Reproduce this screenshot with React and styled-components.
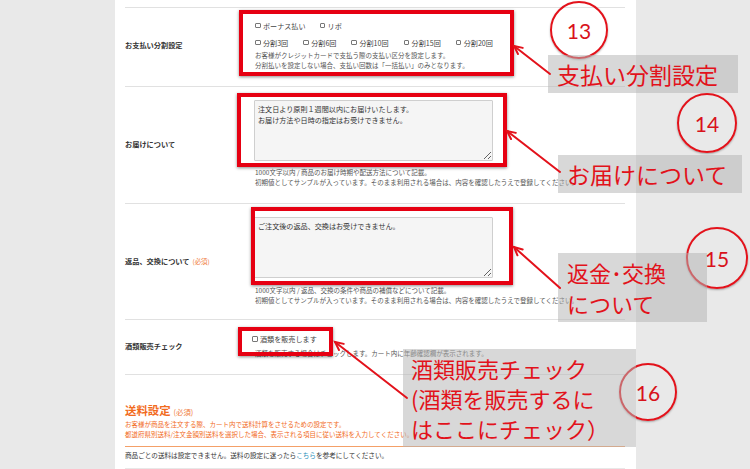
import React from 'react';
import styled, { createGlobalStyle } from 'styled-components';

const GlobalStyle = createGlobalStyle`
  html, body {
    margin: 0;
    padding: 0;
  }
  body {
    background: #e9e9e9;
    font-family: "Noto Sans CJK JP", "Noto Sans", sans-serif;
    color: #333;
  }
`;

const Screen = styled.div`
  position: relative;
  width: 750px;
  height: 469px;
  overflow: hidden;
  background: #e9e9e9;
`;

const Panel = styled.main`
  box-sizing: border-box;
  margin-left: 115px;
  width: 521px;
  height: 100%;
  padding: 7px 11px 0 10px;
  background: #fff;
`;

const Row = styled.section`
  display: grid;
  grid-template-columns: 130px 1fr;
  align-items: center;
  border-top: 1px solid #e1e1e1;
  padding: ${(p) => p.$pad};
`;

const Label = styled.div`
  font-size: 7.2px;
  font-weight: 700;
  color: #333;
  line-height: 10px;
`;

const Required = styled.span`
  margin-left: 3px;
  font-size: ${(p) => p.$fs || 6.4}px;
  font-weight: 400;
  color: #f07a3a;
`;

const Field = styled.div`
  display: flex;
  flex-direction: column;
`;

const CheckLine = styled.div`
  display: flex;
  align-items: center;
  gap: ${(p) => p.$gap || 15}px;
  height: ${(p) => p.$h || 11}px;
  margin-bottom: ${(p) => p.$mb || 0}px;
  margin-left: ${(p) => p.$ml || 0}px;
`;

const Check = styled.label`
  display: flex;
  align-items: center;
  gap: 2.5px;
  font-size: 7.1px;
  color: #444;
  white-space: nowrap;
`;

const Box = styled.span`
  box-sizing: border-box;
  width: 5.5px;
  height: 5.5px;
  border: 0.8px solid #777;
  border-radius: 1px;
  background: #fff;
`;

const Help = styled.div`
  margin-top: ${(p) => p.$mt || 0}px;
  font-size: 6.5px;
  line-height: 10px;
  color: #555;
  white-space: nowrap;
`;

const TextArea = styled.textarea`
  box-sizing: border-box;
  display: block;
  width: 239px;
  height: 61px;
  margin: 0 0 0 -1px;
  padding: 3px 3px;
  border: 1px solid #cfcfcf;
  border-radius: 1px;
  background: #f5f5f5;
  font-family: "Noto Sans CJK JP", sans-serif;
  font-size: 7.1px;
  line-height: 11px;
  color: #333;
  resize: vertical;
  outline: none;
`;

const Shipping = styled.section`
  border-top: 1px solid #e1e1e1;
  padding-top: 28px;
`;

const ShippingHead = styled.div`
  padding-bottom: 7px;
  border-bottom: 1px solid #f4a068;
  color: #f26b1d;
`;

const Title = styled.h2`
  margin: 0;
  font-size: 11.4px;
  line-height: 14px;
  font-weight: 700;
`;

const Orange = styled.div`
  font-size: 6.5px;
  line-height: 10px;
  white-space: nowrap;
`;

const Plain = styled.div`
  margin-top: 3px;
  font-size: 6.6px;
  line-height: 10px;
  color: #333;
  white-space: nowrap;
`;

const Link = styled.span`
  color: #2a8fb8;
`;

const Bar = styled.div`
  margin-top: 8px;
  height: 10px;
  background: #e8e8e8;
`;

/* annotation layer */

const Frame = styled.div`
  position: absolute;
  box-sizing: border-box;
  left: ${(p) => p.$x}px;
  top: ${(p) => p.$y}px;
  width: ${(p) => p.$w}px;
  height: ${(p) => p.$h}px;
  border: 4px solid #e60012;
  box-shadow: 0 1px 3px rgba(0, 0, 0, 0.45);
`;

const Badge = styled.div`
  position: absolute;
  box-sizing: border-box;
  left: ${(p) => p.$x - p.$r}px;
  top: ${(p) => p.$y - p.$r}px;
  width: ${(p) => p.$r * 2}px;
  height: ${(p) => p.$r * 2}px;
  display: flex;
  align-items: center;
  justify-content: center;
  border: 2.5px solid #e3121b;
  border-radius: 50%;
  box-shadow: 0 1px 2px rgba(0, 0, 0, 0.3);
  color: #d8121b;
  font-family: Lato, "Open Sans", sans-serif;
  font-size: 21px;
`;

const Caption = styled.div`
  position: absolute;
  box-sizing: border-box;
  left: ${(p) => p.$x}px;
  top: ${(p) => p.$y}px;
  width: ${(p) => p.$w}px;
  height: ${(p) => p.$h}px;
  padding-left: ${(p) => p.$pl || 9}px;
  display: flex;
  flex-direction: column;
  justify-content: center;
  background: rgba(180, 180, 180, 0.52);
  color: #e2121b;
  font-family: "Noto Sans CJK JP", sans-serif;
  font-size: ${(p) => p.$fs || 22}px;
  line-height: ${(p) => p.$lh || 30}px;
  white-space: nowrap;
`;

const Arrows = styled.svg`
  position: absolute;
  left: 0;
  top: 0;
  pointer-events: none;
`;

const payments = ['分割3回', '分割6回', '分割10回', '分割15回', '分割20回'];

const arrows = [
  [550, 74, 514, 46],
  [560, 172, 507, 131],
  [560, 288, 514, 247],
  [407, 398, 335, 342],
];

const Arrow = ({ x1, y1, x2, y2 }) => {
  const a = Math.atan2(y1 - y2, x1 - x2);
  const len = 9;
  const spread = 0.45;
  const p1 = [x2 + len * Math.cos(a + spread), y2 + len * Math.sin(a + spread)];
  const p2 = [x2 + len * Math.cos(a - spread), y2 + len * Math.sin(a - spread)];
  return (
    <g stroke="#e3121b" strokeWidth="2" fill="none" strokeLinecap="round">
      <line x1={x1} y1={y1} x2={x2} y2={y2} />
      <polyline points={`${p1[0]},${p1[1]} ${x2},${y2} ${p2[0]},${p2[1]}`} />
    </g>
  );
};

const App = () => {
  return (
    <Screen>
      <GlobalStyle />
      <Panel>
        <Row $pad="12px 0 16px">
          <Label>お支払い分割設定</Label>
          <Field>
            <CheckLine $mb={6} $gap={14}>
              <Check><Box />ボーナス払い</Check>
              <Check><Box />リボ</Check>
            </CheckLine>
            <CheckLine>
              {payments.map((p) => (
                <Check key={p}><Box />{p}</Check>
              ))}
            </CheckLine>
            <Help $mt={2}>
              お客様がクレジットカードで支払う際の支払い区分を設定します。
              <br />
              分割払いを設定しない場合、支払い回数は「一括払い」のみとなります。
            </Help>
          </Field>
        </Row>

        <Row $pad="13px 0 16px">
          <Label>お届けについて</Label>
          <Field>
            <TextArea
              readOnly
              defaultValue={'注文日より原則１週間以内にお届けいたします。\nお届け方法や日時の指定はお受けできません。'}
            />
            <Help $mt={6}>
              1000文字以内 / 商品のお届け時期や配送方法について記載。
              <br />
              初期値としてサンプルが入っています。そのまま利用される場合は、内容を確認したうえで登録してください。
            </Help>
          </Field>
        </Row>

        <Row $pad="13px 0 14px">
          <Label>
            返品、交換について<Required>(必須)</Required>
          </Label>
          <Field>
            <TextArea readOnly defaultValue="ご注文後の返品、交換はお受けできません。" />
            <Help $mt={7}>
              1000文字以内 / 返品、交換の条件や商品の補償などについて記載。
              <br />
              初期値としてサンプルが入っています。そのまま利用される場合は、内容を確認したうえで登録してください。
            </Help>
          </Field>
        </Row>

        <Row $pad="14px 0 16px">
          <Label>酒類販売チェック</Label>
          <Field>
            <CheckLine $h={10} $mb={4} $ml={-3}>
              <Check><Box />酒類を販売します</Check>
            </CheckLine>
            <Help>酒類を販売する場合はチェックします。カート内に年齢確認欄が表示されます。</Help>
          </Field>
        </Row>

        <Shipping>
          <ShippingHead>
            <Title>
              送料設定<Required $fs={7.4}>(必須)</Required>
            </Title>
            <Orange>
              お客様が商品を注文する際、カート内で送料計算をさせるための設定です。
              <br />
              都道府県別送料/注文金額別送料を選択した場合、表示される項目に従い送料を入力してください。
            </Orange>
          </ShippingHead>
          <Plain>
            商品ごとの送料は設定できません。送料の設定に迷ったら<Link>こちら</Link>を参考にしてください。
          </Plain>
          <Bar />
        </Shipping>
      </Panel>

      <Frame $x={239} $y={10} $w={275} $h={66} />
      <Frame $x={237} $y={93} $w={270} $h={74} />
      <Frame $x={251} $y={207} $w={262} $h={78} />
      <Frame $x={238} $y={327} $w={95} $h={29} />

      <Badge $x={579} $y={30} $r={29}>13</Badge>
      <Badge $x={707} $y={123} $r={30}>14</Badge>
      <Badge $x={717} $y={258} $r={31}>15</Badge>
      <Badge $x={648} $y={392} $r={29}>16</Badge>

      <Caption $x={548} $y={55} $w={190} $h={38} $fs={23}>支払い分割設定</Caption>
      <Caption $x={558} $y={155} $w={184} $h={38} $fs={23}>お届けについて</Caption>
      <Caption $x={558} $y={253} $w={149} $h={69} $fs={22} $lh={31}>
        <span>返金･交換</span>
        <span>について</span>
      </Caption>
      <Caption $x={403} $y={349} $w={233} $h={98} $fs={22} $lh={30} $pl={8}>
        <span>酒類販売チェック</span>
        <span>(酒類を販売するに</span>
        <span>はここにチェック）</span>
      </Caption>

      <Arrows width="750" height="469" viewBox="0 0 750 469">
        {arrows.map(([x1, y1, x2, y2], i) => (
          <Arrow key={i} x1={x1} y1={y1} x2={x2} y2={y2} />
        ))}
      </Arrows>
    </Screen>
  );
};

export default App;
